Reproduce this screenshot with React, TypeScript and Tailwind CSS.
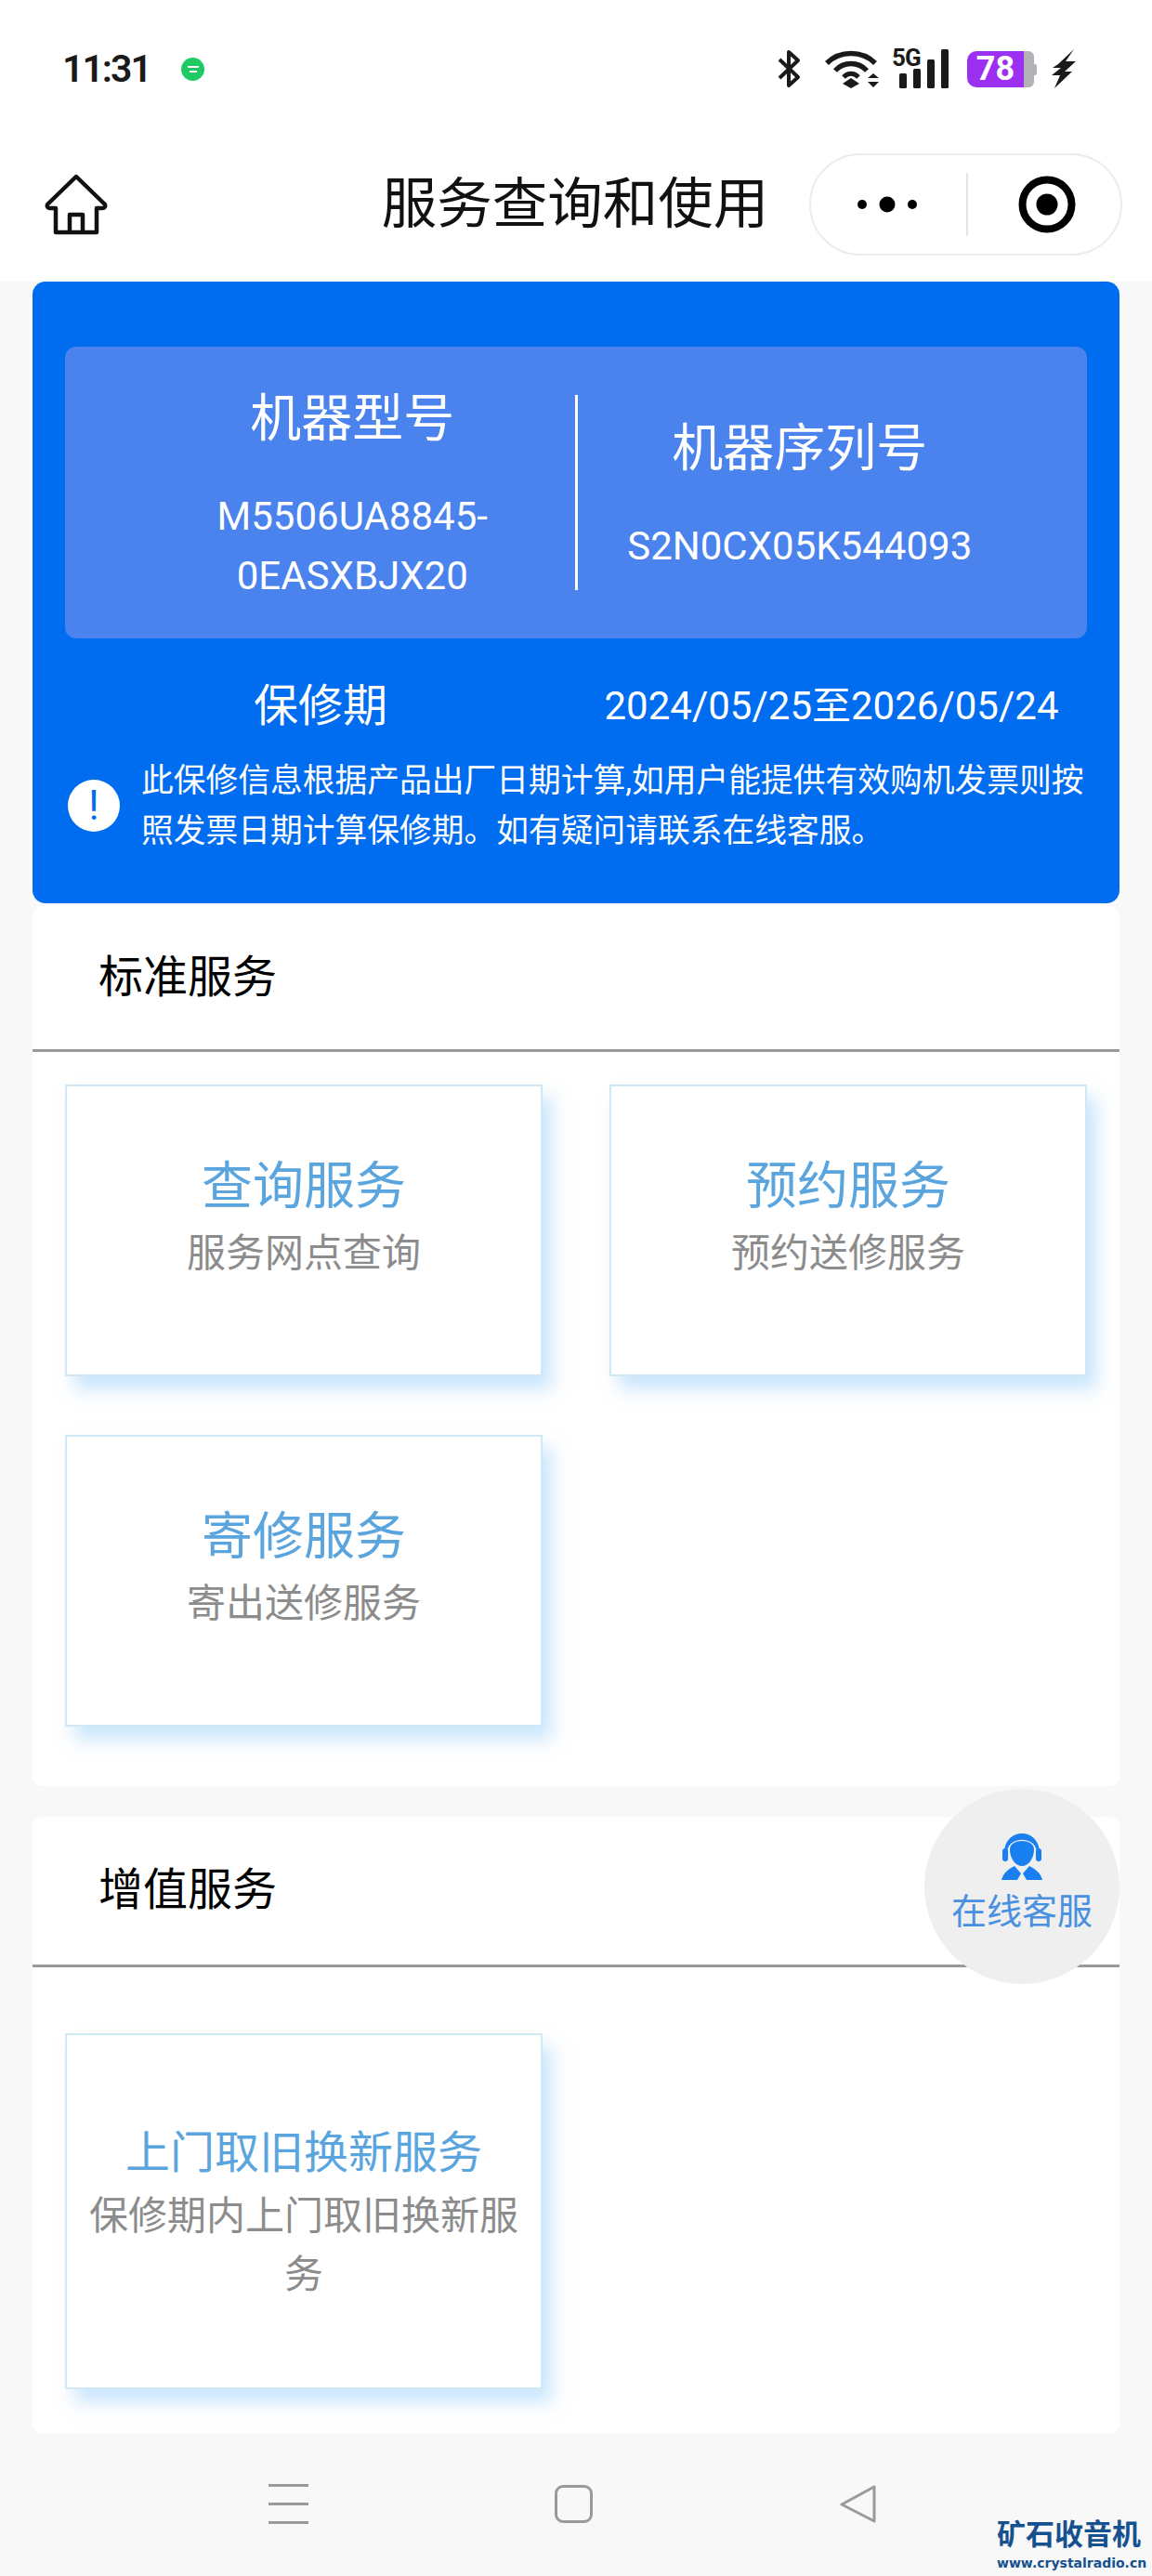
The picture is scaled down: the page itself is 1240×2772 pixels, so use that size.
import React from 'react';

function Bluetooth() {
  return (
    <svg width="25" height="42" viewBox="0 0 25 42" fill="none" stroke="#1a1a1a" strokeWidth="4">
      <path d="M2 11 L22 30 L12 39 V3 L22 12 L2 31" strokeLinejoin="round" />
    </svg>
  );
}

function Wifi() {
  return (
    <svg width="60" height="42" viewBox="0 0 60 42" fill="none">
      <path d="M2 15 C16 1 40 1 54 15" stroke="#1a1a1a" strokeWidth="5.5" />
      <path d="M11 23 C20 13 36 13 45 23" stroke="#1a1a1a" strokeWidth="5.5" />
      <path d="M20 30 C25 25 31 25 36 30" stroke="#1a1a1a" strokeWidth="5" />
      <path d="M28 31 L37 37 L28 42 L19 37 Z" fill="#1a1a1a" />
      <path d="M52 26 L58 31 H46 Z M46 35 H58 L52 41 Z" fill="#1a1a1a" />
    </svg>
  );
}

function Bars() {
  return (
    <svg width="53" height="42" viewBox="0 0 53 42" fill="#1a1a1a">
      <rect x="0" y="26" width="8" height="16" rx="1.5" />
      <rect x="15" y="21" width="8" height="21" rx="1.5" />
      <rect x="30" y="11" width="8" height="31" rx="1.5" />
      <rect x="45" y="0" width="8" height="42" rx="1.5" />
    </svg>
  );
}

function Bolt() {
  return (
    <svg width="26" height="42" viewBox="0 0 26 42" fill="#1a1a1a">
      <path d="M24 0 L7 16 L1 20 H10 L0 28 H9 L3 42 L22 24 H14 L26 13 H15 Z" />
    </svg>
  );
}

function HomeIcon() {
  return (
    <svg width="68" height="66" viewBox="0 0 68 66" fill="none" stroke="#111" strokeWidth="4.5" strokeLinejoin="round">
      <path d="M34 3 L65 33 Q66 37 62 37 H56 V63 H12 V37 H6 Q2 37 3 33 Z" />
      <path d="M27 63 V44 H41 V63" />
    </svg>
  );
}

function Headset() {
  return (
    <svg width="44" height="52" viewBox="0 0 44 52" fill="#1a7ff0">
      <path d="M3 22 C3 -6 41 -6 41 22 H38 C38 3 6 3 6 22 Z" />
      <rect x="1" y="17" width="6" height="14" rx="3" />
      <rect x="37" y="17" width="6" height="14" rx="3" />
      <path d="M9 18 C9 6 35 6 35 18 C35 28 29 36 22 36 C15 36 9 28 9 18 Z" />
      <path d="M14 36 L21 44 L17 51 H0 C2 43 8 39 14 36 Z" />
      <path d="M30 36 L23 44 L27 51 H44 C42 43 36 39 30 36 Z" />
    </svg>
  );
}

function ServiceCard({ title, desc, large }: { title: string; desc: string; large?: boolean }) {
  return (
    <div
      className={
        'bg-white border-2 border-[#cfe8f4] shadow-[10px_14px_18px_rgba(150,205,250,0.5)] text-center ' +
        (large ? 'h-[383px] px-[20px] pt-[97px]' : 'h-[314px] px-[20px] pt-[74px]')
      }
    >
      <div className={large ? 'text-[48px] leading-[60px] text-[#5aa5de]' : 'text-[55px] leading-[66px] text-[#5aa5de]'}>{title}</div>
      <div className={'text-[#8c8c8c] text-[42px] leading-[63px] ' + (large ? 'mt-[6px]' : 'mt-[8px]')}>{desc}</div>
    </div>
  );
}

export default function App() {
  return (
    <div className="relative w-[1240px] h-[2772px] overflow-hidden bg-[#f8f8f8] font-['Roboto','Noto_Sans_CJK_SC',sans-serif]">
      {/* Status bar + title */}
      <div className="bg-white h-[303px]">
        <div className="h-[165px] flex items-start pt-[53px] pl-[67px]">
          <span className="text-[41px] leading-[42px] font-semibold text-[#1a1a1a] w-[128px] tracking-[-2px]">11:31</span>
          <div className="mt-[9px] w-[25px] h-[25px] rounded-full bg-[#1fc964] flex flex-col items-center justify-center gap-[3px]">
            <span className="w-[12px] h-[2px] bg-white" />
            <span className="w-[8px] h-[2px] bg-white" />
          </div>
          <div className="ml-[617px] flex items-start">
            <Bluetooth />
            <div className="ml-[26px]"><Wifi /></div>
            <div className="ml-[20px] relative"><Bars />
              <span className="absolute left-[-8px] top-[-5px] text-[26px] leading-[28px] font-bold text-[#1a1a1a] tracking-[-1px]">5G</span>
            </div>
            <div className="ml-[20px] mt-[2px] flex items-center">
              <div className="w-[61px] h-[39px] bg-[#9b30f0] rounded-l-[10px] text-white text-[36px] leading-[39px] font-bold text-center">78</div>
              <div className="w-[11px] h-[39px] bg-[#b4b1b6] rounded-r-[6px]" />
              <div className="w-[3px] h-[12px] bg-[#b4b1b6] rounded-r-[2px]" />
            </div>
            <div className="ml-[16px]"><Bolt /></div>
          </div>
        </div>
        <div className="relative h-[110px] flex items-center justify-center">
          <div className="absolute left-[48px] top-[22px]"><HomeIcon /></div>
          <span className="text-[59.5px] leading-[110px] text-[#111] pr-[2px]">服务查询和使用</span>
          <div className="absolute left-[871px] top-0 w-[337px] h-[110px] rounded-full border-2 border-[#ececec] bg-white flex items-center">
            <svg className="ml-[49px]" width="66" height="20" viewBox="0 0 66 20" fill="#000">
              <circle cx="6" cy="10" r="5" />
              <circle cx="33" cy="10" r="8.5" />
              <circle cx="60" cy="10" r="5" />
            </svg>
            <div className="ml-[52px] w-[2px] h-[68px] bg-[#e4e4e4]" />
            <svg className="ml-[54px]" width="62" height="62" viewBox="0 0 62 62" fill="none">
              <circle cx="31" cy="31" r="26.5" stroke="#000" strokeWidth="8" />
              <circle cx="31" cy="31" r="11.5" fill="#000" />
            </svg>
          </div>
        </div>
      </div>

      <div className="px-[35px]">
        {/* Warranty card */}
        <div className="bg-[#006cf0] h-[669px] rounded-[14px] px-[35px] pt-[70px] text-white">
          <div className="bg-[#4a83ee] h-[314px] rounded-[12px] flex items-center">
            <div className="flex-1 pl-[70px] pt-[7px] text-center">
              <div className="text-[55px] leading-[70px]">机器型号</div>
              <div className="mt-[39px] text-[42px] leading-[64px]">M5506UA8845-<br />0EASXBJX20</div>
            </div>
            <div className="w-[3px] h-[210px] bg-white shrink-0" />
            <div className="flex-1 pr-[70px] pt-[7px] text-center">
              <div className="text-[55px] leading-[70px]">机器序列号</div>
              <div className="mt-[39px] text-[42px] leading-[64px]">S2N0CX05K544093</div>
            </div>
          </div>
          <div className="grid grid-cols-2 mt-[40px] text-center">
            <div className="text-[48px] leading-[66px]">保修期</div>
            <div className="text-[42px] leading-[66px] whitespace-nowrap">2024/05/25至2026/05/24</div>
          </div>
          <div className="mt-[20px] flex items-center ml-[3px]">
            <div className="w-[56px] h-[56px] rounded-full bg-white text-[#006cf0] text-[44px] leading-[56px] font-normal text-center shrink-0">!</div>
            <div className="ml-[23px] text-[34.75px] leading-[54px] whitespace-nowrap">
              此保修信息根据产品出厂日期计算,如用户能提供有效购机发票则按<br />照发票日期计算保修期。如有疑问请联系在线客服。
            </div>
          </div>
        </div>

        {/* Standard services */}
        <div className="mt-[3px] bg-white rounded-[10px] pb-[64px]">
          <div className="h-[157px] border-b-[3px] border-[#999] pl-[71px] pt-[44px] text-[48px] leading-[66px] text-black">标准服务</div>
          <div className="grid grid-cols-[514px_514px] gap-x-[72px] gap-y-[63px] px-[35px] pt-[35px]">
            <ServiceCard title="查询服务" desc="服务网点查询" />
            <ServiceCard title="预约服务" desc="预约送修服务" />
            <ServiceCard title="寄修服务" desc="寄出送修服务" />
          </div>
        </div>

        {/* Value-added services */}
        <div className="mt-[33px] bg-white rounded-[10px] pb-[48px]">
          <div className="h-[162px] border-b-[3px] border-[#999] pl-[71px] pt-[46px] text-[48px] leading-[66px] text-black">增值服务</div>
          <div className="grid grid-cols-[514px_514px] gap-x-[72px] px-[35px] pt-[71px]">
            <ServiceCard large title="上门取旧换新服务" desc="保修期内上门取旧换新服务" />
          </div>
        </div>
      </div>

      {/* Floating support button */}
      <div className="absolute left-[995px] top-[1925px] w-[210px] h-[210px] rounded-full bg-[#efefef] flex flex-col items-center pt-[47px]">
        <Headset />
        <span className="text-[38px] leading-[48px] text-[#4a90e0] mt-[9px]">在线客服</span>
      </div>

      {/* Android nav */}
      <div className="flex items-center pl-[289px] gap-[265px] pt-[54px]">
        <div className="w-[43px] h-[43px] flex flex-col justify-between">
          <span className="h-[3px] bg-[#9a9a9a]" />
          <span className="h-[3px] bg-[#9a9a9a]" />
          <span className="h-[3px] bg-[#9a9a9a]" />
        </div>
        <div className="w-[41px] h-[41px] rounded-[9px] border-[3px] border-[#9a9a9a]" />
        <svg width="41" height="41" viewBox="0 0 41 41" fill="none" stroke="#9a9a9a" strokeWidth="3" strokeLinejoin="round">
          <path d="M38 2 V39 L3 21 Z" />
        </svg>
      </div>

      {/* Watermark */}
      <div className="absolute left-[1073px] top-[2708px] text-[#15508f] whitespace-nowrap">
        <div className="text-[31px] leading-[40px] font-bold">矿石收音机</div>
        <div className="text-[14px] leading-[20px] font-semibold font-['DejaVu_Sans',sans-serif]">www.crystalradio.cn</div>
      </div>
    </div>
  );
}
